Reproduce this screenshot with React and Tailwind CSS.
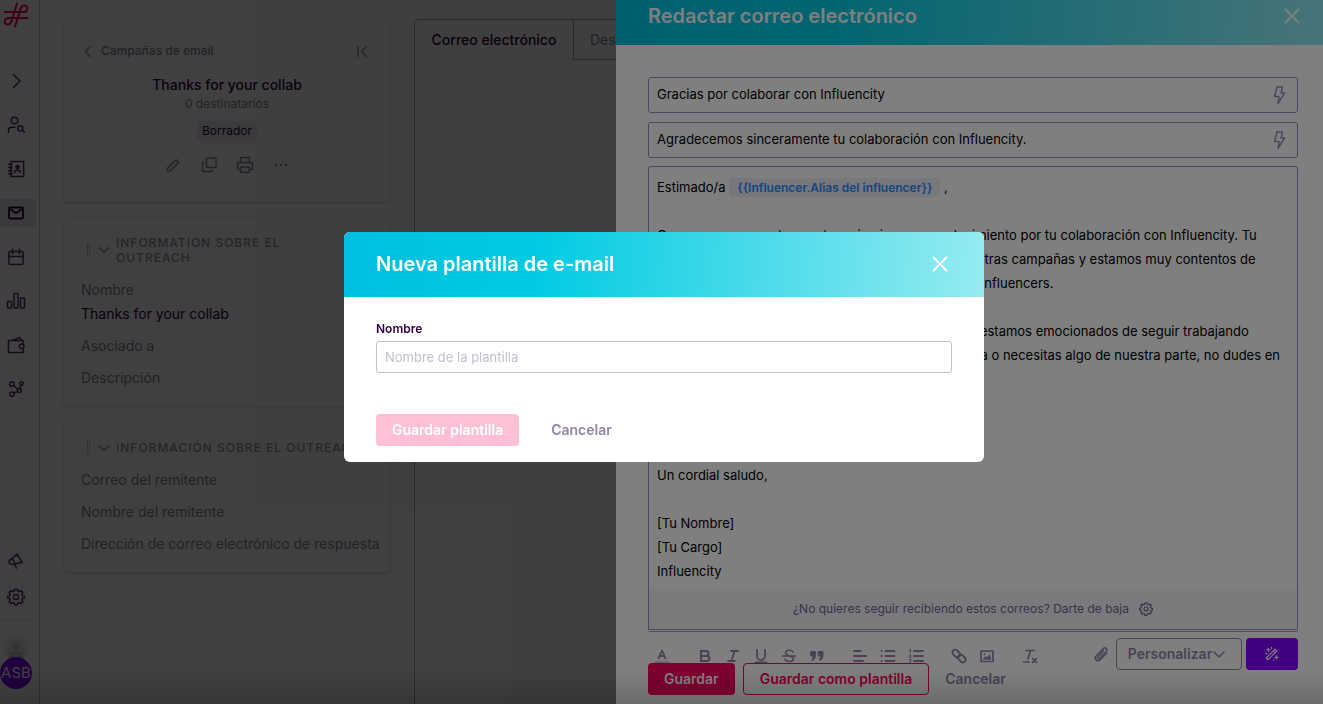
import React from "react";

function Svg({ size = 18, box = 18, sw = 1.5, className = "", children }) {
  return (
    <svg
      aria-hidden="true"
      width={size}
      height={size}
      viewBox={`0 0 ${box} ${box}`}
      fill="none"
      stroke="currentColor"
      strokeWidth={sw}
      strokeLinecap="round"
      strokeLinejoin="round"
      className={`shrink-0 ${className}`}
    >
      {children}
    </svg>
  );
}

const GearShape = (
  <>
    <path d="M7.6 1.2h2.8l.4 2 1.4.6 1.7-1.2 2 2-1.2 1.7.6 1.4 2 .4v2l-2 .5-.6 1.4 1.2 1.7-2 2-1.7-1.2-1.4.6-.4 2H7.6l-.4-2-1.4-.6-1.7 1.2-2-2 1.2-1.7-.6-1.4-2-.5v-2l2-.4.6-1.4-1.2-1.7 2-2 1.7 1.2 1.4-.6z" />
    <circle cx="9" cy="9" r="2.6" />
  </>
);

function Logo() {
  return (
    <Svg size={26} box={26} sw={2} className="text-[#ff005f]">
      <path d="M1.500 10H20c2.800 0 4.300-1.400 4.300-3.500 0-1.700-1.300-3-3-3-1.900 0-3.100 1.300-3.700 3.200L12 24.500" />
      <path d="M24.500 16H6c-2.800 0-4.300 1.400-4.300 3.500 0 1.700 1.300 3 3 3 1.900 0 3.100-1.300 3.700-3.200L14 1.500" />
    </Svg>
  );
}

const navIcons = [
  { label: "Expandir", icon: <Svg><path d="M6.500 2.500 13 9l-6.500 6.500" /></Svg> },
  {
    label: "Descubrir",
    icon: (
      <Svg>
        <circle cx="7.500" cy="4.500" r="3.300" />
        <path d="M1.500 16.500v-2.200c0-1.800 1.300-3 3-3H8" />
        <circle cx="13.300" cy="12.300" r="2.600" />
        <path d="m15.300 14.300 2 2" />
      </Svg>
    ),
  },
  {
    label: "Contactos",
    icon: (
      <Svg>
        <path d="M4 1.500h12.700v15H4zM1.500 4.300H5M1.500 7.500H5M1.500 10.700H5M1.500 13.800H5" />
        <circle cx="10.500" cy="7" r="1.600" fill="currentColor" />
        <path d="M7.500 12.500c0-3 6-3 6 0" />
      </Svg>
    ),
  },
  {
    label: "Correo",
    active: true,
    icon: (
      <Svg sw={1.8}>
        <rect x="2" y="3.500" width="14" height="11" rx="1" />
        <path d="m2.500 4.500 6.500 4.800 6.500-4.800" />
      </Svg>
    ),
  },
  {
    label: "Calendario",
    icon: (
      <Svg>
        <rect x="2" y="3.500" width="14" height="13" rx="1" />
        <path d="M2 8.500h14M5.500 1.500v4M12.500 1.500v4" />
      </Svg>
    ),
  },
  {
    label: "Informes",
    icon: (
      <Svg size={20} box={20}>
        <rect x="1.500" y="10.500" width="4" height="6.500" rx=".6" />
        <rect x="8" y="2.500" width="4" height="14.500" rx=".6" />
        <rect x="14.500" y="7" width="4" height="10" rx=".6" />
      </Svg>
    ),
  },
  {
    label: "Pagos",
    icon: (
      <Svg>
        <path d="M16 8V4.500H1.500v12H16V12.500M5 4.500l8-3 1.200 3" />
        <circle cx="14.700" cy="10.200" r="2.300" />
      </Svg>
    ),
  },
  {
    label: "Integraciones",
    icon: (
      <Svg>
        <circle cx="4.800" cy="4" r="2.300" />
        <circle cx="14.500" cy="3.500" r="1.700" />
        <circle cx="5" cy="14.200" r="2.200" />
        <circle cx="12.300" cy="10.500" r="2" />
        <path d="m6.600 5.500 4.200 3.700M13.900 5.100l-1.100 3.400M7 13.200l3.500-1.800" />
      </Svg>
    ),
  },
];

function Sidebar() {
  return (
    <aside className="flex w-10 shrink-0 flex-col justify-between border-r border-[#c4c0cc] pt-0.5 pb-[15px] text-[#5b2870]">
      <nav className="flex flex-col">
        <a href="#inicio" aria-label="Inicio" className="ml-[3px] block">
          <Logo />
        </a>
        <div className="mt-[39px] flex flex-col gap-4">
          {navIcons.map((n) => (
            <a
              key={n.label}
              href={`#${n.label}`}
              aria-label={n.label}
              className={`flex h-7 w-9 items-center justify-center rounded-r pr-1 ${
                n.active ? "bg-[#e6e6f2] text-[#32003f]" : ""
              }`}
            >
              {n.icon}
            </a>
          ))}
        </div>
      </nav>
      <div className="flex flex-col">
        <a href="#novedades" aria-label="Novedades" className="flex h-9 w-8 items-center justify-center">
          <Svg>
            <path d="M10 2 15 10.200 6 12.500C3.500 13 2 11.500 2 10s1-2.500 2.500-3zM5.500 6.500l2.300 5.500M7.500 12.500l2 3.500" />
          </Svg>
        </a>
        <a href="#ajustes" aria-label="Ajustes" className="flex h-9 w-8 items-center justify-center">
          <Svg>{GearShape}</Svg>
        </a>
        <div className="mt-[5px] mr-1 mb-4 border-t border-[#e2e0e8]" />
        <div className="ml-1 flex size-6 items-end justify-center overflow-hidden rounded-full bg-[#eaeaf2]">
          <svg aria-hidden="true" width="16" height="20" viewBox="0 0 16 20" fill="#cccad6">
            <circle cx="8" cy="5" r="4" />
            <path d="M1 20v-6q0-4 4-4h6q4 0 4 4v6z" />
          </svg>
        </div>
        <div className="-mt-1 flex size-8 items-center justify-center rounded-full bg-[#8300ff] text-[15px] text-white">
          ASB
        </div>
      </div>
    </aside>
  );
}

function Card({ className = "", children }) {
  return (
    <section className={`rounded-xs border border-[#f4f4f6] px-4 shadow-[0_1px_4px_rgba(0,0,0,0.16)] ${className}`}>
      {children}
    </section>
  );
}

function SectionTitle({ children }) {
  return (
    <h2 className="flex items-center text-xs leading-[15px] font-medium tracking-[1px] text-[#9a92a8] uppercase">
      <svg aria-hidden="true" width="16" height="14" viewBox="0 0 16 14" fill="currentColor" className="shrink-0">
        {[0, 2, 4, 6, 8, 10, 12].map((y) => (
          <g key={y}>
            <rect x="6" y={y} width="1" height="1" />
            <rect x="8" y={y} width="1" height="1" />
          </g>
        ))}
      </svg>
      <Svg size={12} box={12} sw={1.3} className="mr-1.5 ml-px">
        <path d="m1 3.500 5 5 5-5" />
      </Svg>
      <span>{children}</span>
    </h2>
  );
}

function Details() {
  return (
    <div className="flex w-[326px] shrink-0 flex-col gap-4">
      <Card className="h-[183px] pt-[23px]">
        <div className="flex h-4 items-center text-[#8c8499]">
          <button type="button" className="flex items-center gap-1.5 text-xs font-medium">
            <Svg size={14} box={14} sw={1.3}><path d="M9.500 2.500 4.500 7.500l5 5" /></Svg>
            Campañas de email
          </button>
          <button type="button" aria-label="Contraer" className="mr-1 ml-auto">
            <Svg size={14} box={14} sw={1.3}><path d="M3 2.500v10M11.500 2.500 6.500 7.500l5 5" /></Svg>
          </button>
        </div>
        <div className="mt-4 flex flex-col items-center">
          <h1 className="text-sm leading-5 font-medium text-[#32003f]">Thanks for your collab</h1>
          <p className="text-xs leading-[18px] text-[#8c8499]">0 destinatarios</p>
          <span className="mt-2 rounded bg-[#ececf4] px-[5px] text-xs leading-5 text-[#32003f]">Borrador</span>
          <div className="mt-[15px] flex gap-[18px] text-[#8c8499]">
            <button type="button" aria-label="Editar">
              <Svg><path d="M3.500 12.300 11 4.500q1.300-1 2.500.3 1.200 1.200.2 2.400L6.500 14.800l-3.300.2z" /></Svg>
            </button>
            <button type="button" aria-label="Duplicar">
              <Svg>
                <rect x="6.500" y="2" width="9.500" height="9.500" rx="1" />
                <path d="M4 6.500H2.500v9h9.500V14" />
              </Svg>
            </button>
            <button type="button" aria-label="Imprimir">
              <Svg>
                <path d="M4.500 6V1.500h9V6M4.500 13.500H1.500V8q0-1.500 1.500-1.500h12q1.500 0 1.500 1.500v5.500h-3" />
                <rect x="4.500" y="11" width="9" height="5.500" rx="1" />
              </Svg>
            </button>
            <button type="button" aria-label="Más opciones">
              <Svg>
                <g fill="currentColor" stroke="none">
                  <circle cx="4" cy="9" r="1.200" />
                  <circle cx="9" cy="9" r="1.200" />
                  <circle cx="14" cy="9" r="1.200" />
                </g>
              </Svg>
            </button>
          </div>
        </div>
      </Card>
      <Card className="pt-4 pb-[15px]">
        <SectionTitle>
          Information sobre el
          <br />
          outreach
        </SectionTitle>
        <dl className="mt-[13px] text-sm leading-6 text-[#8c8499]">
          <dt>Nombre</dt>
          <dd className="mb-2 text-[#32003f]">Thanks for your collab</dd>
          <dt className="mb-2">Asociado a</dt>
          <dt>Descripción</dt>
        </dl>
      </Card>
      <Card className="pt-[17px] pb-[15px] whitespace-nowrap">
        <SectionTitle>Información sobre el outreach</SectionTitle>
        <ul className="mt-[13px] flex flex-col gap-2 text-sm leading-6 text-[#8c8499]">
          <li>Correo del remitente</li>
          <li>Nombre del remitente</li>
          <li>Dirección de correo electrónico de respuesta</li>
        </ul>
      </Card>
    </div>
  );
}

function CampaignTabs() {
  return (
    <section className="min-w-0 flex-1 rounded-tl border-t border-l border-[#a9a3b8]">
      <div className="flex h-10 text-sm">
        <button type="button" className="w-[158px] shrink-0 font-medium text-[#32003f]">
          Correo electrónico
        </button>
        <button type="button" className="border-b border-l border-[#a9a3b8] px-4 text-[#8c8499]">
          Destinatarios
        </button>
      </div>
    </section>
  );
}

function CloseIcon() {
  return <Svg size={18} sw={1.8}><path d="m2.500 2.500 13 13M15.500 2.500l-13 13" /></Svg>;
}

function Field({ label, value }) {
  return (
    <div className="flex h-9 items-center rounded-[3px] border border-[#a08fb8] px-2">
      <input aria-label={label} defaultValue={value} className="min-w-0 flex-1 bg-transparent text-[13px] text-black outline-none" />
      <button type="button" aria-label="Insertar variable" className="text-[#a08fb8]">
        <Svg size={20} box={20} sw={1.5}><path d="M8 2h5.500l-1.500 6h3.500L9 18.500l1-7H5.500z" /></Svg>
      </button>
    </div>
  );
}

function Tool({ label, children }) {
  return (
    <button type="button" aria-label={label} className="flex h-9 w-7 items-center justify-center">
      {children}
    </button>
  );
}

function Toolbar() {
  return (
    <div className="mt-1.5 flex h-9 items-start text-[#9285a8]">
      <div className="flex gap-[15px]">
        <Tool label="Color de texto">
          <Svg sw={1.8}><path d="M5.500 11.500 9 3.500l3.500 8M6.800 9h4.400" /><path d="M2.500 15.300h13" strokeOpacity=".5" strokeWidth="2" /></Svg>
        </Tool>
        <div className="flex">
          <Tool label="Negrita">
            <Svg sw={2}><path d="M5 4h5a2.500 2.500 0 0 1 0 5H5zM5 9h6a2.500 2.500 0 0 1 0 5H5z" strokeLinejoin="miter" /></Svg>
          </Tool>
          <Tool label="Cursiva"><Svg sw={1.8}><path d="M7 4h7M4 14h7M10.500 4l-3 10" /></Svg></Tool>
          <Tool label="Subrayado"><Svg sw={1.8}><path d="M5 3v6a4 4 0 0 0 8 0V3M3.500 15.500h11" /></Svg></Tool>
          <Tool label="Tachado">
            <Svg sw={1.6}><path d="M13 5c-1-2.300-7.500-2.500-7.500.8C5.500 8 8 8.300 9.500 9c2 .8 4 1.200 4 3 0 3.300-7.500 3.200-8.500.3M2.500 9h13" /></Svg>
          </Tool>
          <Tool label="Cita">
            <Svg sw={1}>
              <g fill="currentColor">
                <path d="M3 4.500h4.500v4c0 2.500-1 4-3.500 5l1.500-4.500H3zM10.500 4.500H15v4c0 2.500-1 4-3.500 5L13 9h-2.500z" />
              </g>
            </Svg>
          </Tool>
        </div>
        <div className="flex">
          <Tool label="Alinear"><Svg sw={1.8}><path d="M3 4h7M3 9h12M3 14h9" /></Svg></Tool>
          <Tool label="Lista">
            <Svg sw={1.8}><path d="M6.500 4h9M6.500 9h9M6.500 14h9M2.500 4h.1M2.500 9h.1M2.500 14h.1" /></Svg>
          </Tool>
          <Tool label="Lista numerada">
            <Svg sw={1.8}>
              <path d="M7 4h9M7 9h9M7 14h9" />
              <path strokeWidth="1" d="m2.500 3 1-.7v3M2.200 8q1.800-1.200 1.800.3L2.200 10.300H4.200M2.300 12.500h1.900l-1 1.200q2 1.200-1 1.900" />
            </Svg>
          </Tool>
        </div>
        <div className="flex">
          <Tool label="Enlace">
            <Svg sw={1.9}>
              <rect x="2" y="3.700" width="8.500" height="5.600" rx="2.800" transform="rotate(45 6.200 6.500)" />
              <rect x="7.500" y="8.700" width="8.500" height="5.600" rx="2.800" transform="rotate(45 11.800 11.500)" />
            </Svg>
          </Tool>
          <Tool label="Imagen">
            <Svg sw={1.7}>
              <rect x="3" y="4" width="12" height="10.500" />
              <path d="m5.500 12 2-2.500 1.700 1.200L11.500 8l1.200 4z" fill="currentColor" strokeWidth=".8" />
              <circle cx="6.500" cy="7.200" r=".9" fill="currentColor" stroke="none" />
            </Svg>
          </Tool>
        </div>
        <Tool label="Borrar formato">
          <Svg sw={1.7}><path d="M5 3.500h8.500M9.500 3.500 7 12M2.500 15H8M11.500 11.500l4 4M15.500 11.500l-4 4" /></Svg>
        </Tool>
      </div>
      <div className="ml-auto flex h-8 items-center">
        <Tool label="Adjuntar">
          <Svg sw={1.5}>
            <path d="m15 8-6.500 6.500c-3.300 3.200-7.200-.8-4-4L11 3.700c2.400-2.300 5.200.5 3 2.900l-6.300 6.500c-1.300 1.200-2.900-.3-1.700-1.600l5.500-5.700" />
          </Svg>
        </Tool>
        <button type="button" className="ml-px flex h-8 w-[126px] items-center justify-center rounded border border-[#9285a8] pr-1 text-sm font-semibold">
          Personalizar
          <Svg size={14} box={14} sw={1.5}><path d="m2 5 5 5 5-5" /></Svg>
        </button>
        <button type="button" aria-label="Asistente" className="ml-1 flex h-8 w-[52px] items-center justify-center rounded bg-[#8300ff] text-white">
          <Svg size={16} sw={1.3}>
            <path d="m2.500 13.500 10-10 2 2-10 10zM10.500 5.500l2 2M5 2.500v3.500M3.200 4.200h3.600M14 11v3.500M12.300 12.800h3.500M8.500 1.500v1.500M2 8.500h1.500M11 15.500v.5" />
          </Svg>
        </button>
      </div>
    </div>
  );
}

const bodyLines = [
  "",
  "Queremos expresarte nuestro más sincero agradecimiento por tu colaboración con Influencity. Tu",
  "participación ha sido fundamental en el éxito de nuestras campañas y estamos muy contentos de",
  "poder contar contigo en nuestra gran comunidad de influencers.",
  "",
  "Valoramos tanto tu compromiso y profesionalidad, y estamos emocionados de seguir trabajando",
  "juntos en el futuro. Si tienes cualquier otra sugerencia o necesitas algo de nuestra parte, no dudes en",
  "ponerte en contacto con nosotros.",
  "",
  "Gracias de nuevo por tu colaboración.",
  "",
  "Un cordial saludo,",
  "",
  "[Tu Nombre]",
  "[Tu Cargo]",
  "Influencity",
];

function Drawer() {
  return (
    <div className="fixed inset-0 flex justify-end bg-black/50">
      <div className="flex w-[707px] flex-col bg-white">
        <header className="flex h-[45px] shrink-0 items-start justify-between bg-linear-[94deg,#00bfdf_0%,#00cbe3_30%,#90e8f0_100%] px-8 pt-1 pr-[22px] text-white">
          <h2 className="text-xl leading-6 font-semibold">Redactar correo electrónico</h2>
          <button type="button" aria-label="Cerrar" className="mt-[3px]"><CloseIcon /></button>
        </header>
        <div className="flex flex-col pt-8 pr-[25px] pl-8">
          <div className="flex flex-col gap-[9px]">
            <Field label="Asunto" value="Gracias por colaborar con Influencity" />
            <Field label="Vista previa" value="Agradecemos sinceramente tu colaboración con Influencity." />
          </div>
          <div className="mt-2 rounded-[3px] border border-b-3 border-double border-[#a08fb8] text-[13px] leading-6 text-black">
            <div className="px-2 pt-2 pb-[6px]">
              <p className="h-6">
                Estimado/a{" "}
                <span className="rounded bg-[#eeeef8] px-2 py-0.5 text-xs font-semibold text-[#2b8cff]">
                  {"{{Influencer.Alias del influencer}}"}
                </span>{" "}
                ,
              </p>
              {bodyLines.map((line, i) => (
                <p key={i} className="h-6 whitespace-nowrap">{line}</p>
              ))}
            </div>
            <div className="flex h-10 items-center justify-center gap-2.5 bg-[#f5f5fb] text-xs text-[#75658c]">
              ¿No quieres seguir recibiendo estos correos? Darte de baja
              <button type="button" aria-label="Configurar baja"><Svg size={14}>{GearShape}</Svg></button>
            </div>
          </div>
          <Toolbar />
          <div className="relative -mt-[11px] flex items-center gap-2 text-sm font-semibold">
            <button type="button" className="h-8 rounded bg-[#ff005f] px-4 text-white">Guardar</button>
            <button type="button" className="h-8 rounded border border-[#ff005f] bg-white px-4 text-[#ff005f]">
              Guardar como plantilla
            </button>
            <button type="button" className="h-8 px-2 text-[#9285a8]">Cancelar</button>
          </div>
        </div>
      </div>
    </div>
  );
}

function TemplateDialog() {
  return (
    <div className="fixed inset-0 flex items-center justify-center bg-black/50 pb-[10px] pl-[5px]">
      <div role="dialog" aria-labelledby="dialog-title" className="w-[640px] overflow-hidden rounded-md bg-white">
        <header className="flex h-[65px] items-center justify-between bg-linear-[94deg,#00bfdf_0%,#00cbe3_30%,#96ebf1_100%] pr-[35px] pb-0.5 pl-8 text-white">
          <h2 id="dialog-title" className="text-xl font-semibold">Nueva plantilla de e-mail</h2>
          <button type="button" aria-label="Cerrar"><CloseIcon /></button>
        </header>
        <form className="px-8 pt-6 pb-4">
          <label htmlFor="template-name" className="block text-xs leading-4 font-semibold text-[#32003f]">Nombre</label>
          <input
            id="template-name"
            placeholder="Nombre de la plantilla"
            className="mt-1 block h-8 w-full rounded-[3px] border border-[#c3bfd2] px-2 text-[13px] outline-none placeholder:text-[#c3bfd2]"
          />
          <div className="mt-[41px] flex gap-4 text-sm font-semibold">
            <button type="button" className="h-8 rounded bg-[#ffbfd7] px-4 text-white">Guardar plantilla</button>
            <button type="button" className="h-8 px-4 text-[#9285a8]">Cancelar</button>
          </div>
        </form>
      </div>
    </div>
  );
}

export default function App() {
  return (
    <div className="flex h-screen overflow-hidden bg-white font-['Inter','Roboto',sans-serif]">
      <Sidebar />
      <main className="flex min-w-0 flex-1 gap-6 pt-[19px] pl-6">
        <Details />
        <CampaignTabs />
      </main>
      <Drawer />
      <TemplateDialog />
      <div className="pointer-events-none fixed inset-x-0 bottom-0 h-8 bg-linear-to-b from-transparent to-black/15" />
    </div>
  );
}
